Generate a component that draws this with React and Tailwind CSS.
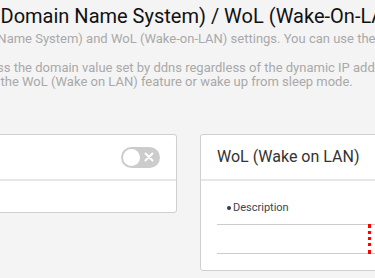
export default function App() {
  return (
    <div className="w-[375px] h-[278px] overflow-hidden bg-[#f4f4f4] font-['Roboto',sans-serif]">
      {/* Page heading */}
      <div className="pt-[3px] whitespace-nowrap">
        <h1 className="-ml-[146px] text-[20px] leading-[26px] text-[#111]">
          DDNS (Dynamic Domain Name System) / WoL (Wake-On-LAN)
        </h1>
        <p className="-ml-[205px] mt-[2px] text-[13px] leading-[16px] text-[#a9a9a9]">
          Configure DDNS (Dynamic Domain Name System) and WoL (Wake-on-LAN) settings. You can use the following features.
        </p>
        <div className="mt-[14px] text-[13px] leading-[14px] text-[#a9a9a9]">
          <p className="-ml-[80px]">You can access the domain value set by ddns regardless of the dynamic IP address.</p>
          <p className="-ml-[73px]">You can use the WoL (Wake on LAN) feature or wake up from sleep mode.</p>
        </div>
      </div>

      {/* Cards */}
      <div className="mt-[45px] flex items-start gap-[23px] -ml-[200px]">
        <div className="w-[377px] shrink-0 bg-white border border-[#cfcfcf] rounded-[3px]">
          <div className="h-[46px] flex items-center justify-end pr-[16px] border-b-2 border-[#e6e6e6]">
            <div className="relative w-[39px] h-[21px] rounded-full bg-[#cccccc]">
              <div className="absolute left-[2px] top-[2px] w-[17px] h-[17px] rounded-full bg-white" />
              <svg className="absolute right-[6px] top-[5.5px]" width="10" height="10" viewBox="0 0 10 10">
                <path d="M1.5 1.5 L8.5 8.5 M8.5 1.5 L1.5 8.5" stroke="white" strokeWidth="2" strokeLinecap="round" />
              </svg>
            </div>
          </div>
          <div className="h-[31px]" />
        </div>

        <div className="w-[300px] shrink-0 bg-white border border-[#cfcfcf] rounded-[3px]">
          <div className="h-[46px] flex items-center pl-[16px] border-b-2 border-[#e6e6e6]">
            <span className="text-[16px] text-[#333]">WoL (Wake on LAN)</span>
          </div>
          <div className="pl-[16px] pt-[20px] pb-[16px]">
            <div className="flex items-center pl-[10px] text-[11px] leading-[14px] text-[#3a4556]">
              <span className="w-[4px] h-[4px] rounded-full bg-[#2f3b4c] mr-[2px]" />
              Description
            </div>
            <div className="mt-[9px] flex h-[30px] border-t border-b border-[#cccccc]">
              <div className="w-[151px]" />
              <div className="flex-1 -my-px border-[3px] border-dotted border-[#ff0000]" />
            </div>
          </div>
        </div>
      </div>
    </div>
  );
}
